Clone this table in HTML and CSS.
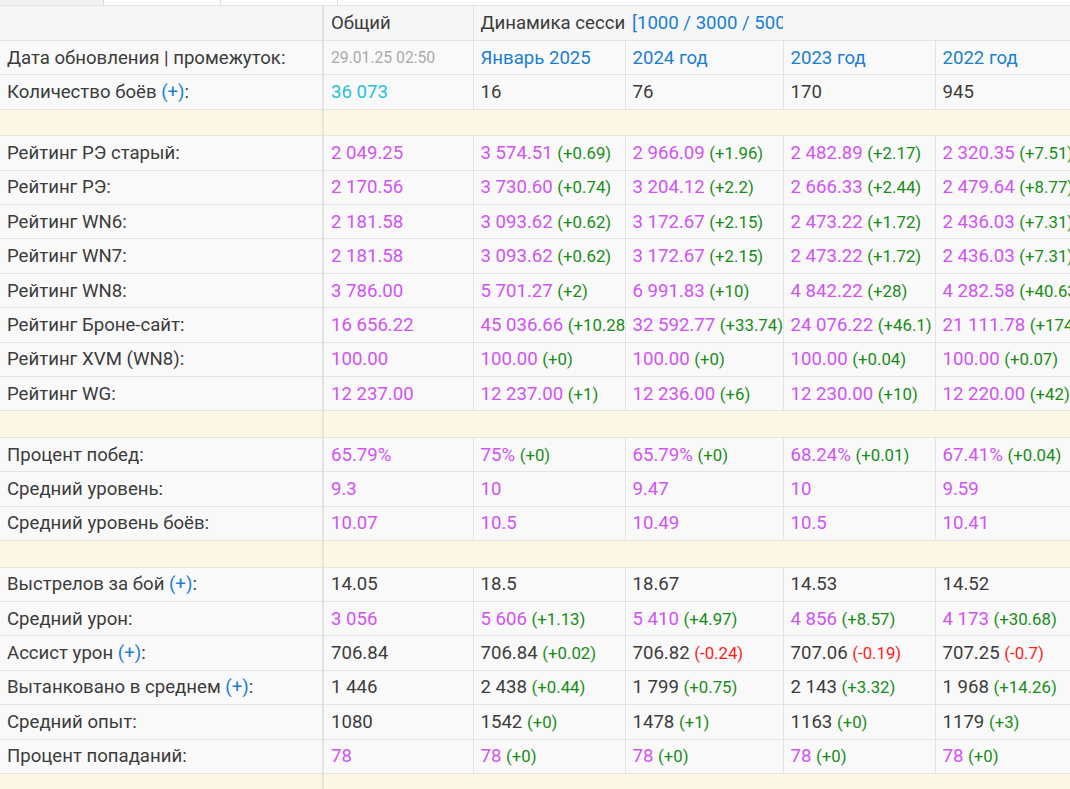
FILE: index.html
```html
<!DOCTYPE html>
<html lang="ru">
<head>
<meta charset="utf-8">
<title>Статистика</title>
<link rel="stylesheet" href="styles.css">
</head>
<body>
<div class="tabs">
  <div class="tab tab-active"></div>
  <div class="tab"></div>
  <div class="tab"></div>
</div>
<div class="wrap">
<table class="stats">
  <colgroup>
    <col class="c-label"><col class="c-total"><col class="c-a"><col class="c-b"><col class="c-c"><col class="c-d">
  </colgroup>
  <tbody>
    <tr class="head">
      <td></td>
      <td class="first">Общий</td>
      <td class="nob">Динамика сессий</td>
      <td class="nob"><span class="link">[1000 / 3000 / 5000]</span></td>
      <td class="nob"></td>
      <td class="nob"></td>
    </tr>
    <tr>
      <td>Дата обновления | промежуток:</td>
      <td class="first date">29.01.25 02:50</td>
      <td class="link">Январь 2025</td>
      <td class="link">2024 год</td>
      <td class="link">2023 год</td>
      <td class="link">2022 год</td>
    </tr>
    <tr>
      <td>Количество боёв <span class="link">(+)</span>:</td>
      <td class="first cyan">36 073</td>
      <td>16</td><td>76</td><td>170</td><td>945</td>
    </tr>
    <tr class="sp"><td></td><td class="first" colspan="5"></td></tr>

    <tr>
      <td>Рейтинг РЭ старый:</td>
      <td class="first p">2 049.25</td>
      <td><span class="p">3 574.51</span> <span class="up">(+0.69)</span></td>
      <td><span class="p">2 966.09</span> <span class="up">(+1.96)</span></td>
      <td><span class="p">2 482.89</span> <span class="up">(+2.17)</span></td>
      <td><span class="p">2 320.35</span> <span class="up">(+7.51)</span></td>
    </tr>
    <tr>
      <td>Рейтинг РЭ:</td>
      <td class="first p">2 170.56</td>
      <td><span class="p">3 730.60</span> <span class="up">(+0.74)</span></td>
      <td><span class="p">3 204.12</span> <span class="up">(+2.2)</span></td>
      <td><span class="p">2 666.33</span> <span class="up">(+2.44)</span></td>
      <td><span class="p">2 479.64</span> <span class="up">(+8.77)</span></td>
    </tr>
    <tr>
      <td>Рейтинг WN6:</td>
      <td class="first p">2 181.58</td>
      <td><span class="p">3 093.62</span> <span class="up">(+0.62)</span></td>
      <td><span class="p">3 172.67</span> <span class="up">(+2.15)</span></td>
      <td><span class="p">2 473.22</span> <span class="up">(+1.72)</span></td>
      <td><span class="p">2 436.03</span> <span class="up">(+7.31)</span></td>
    </tr>
    <tr>
      <td>Рейтинг WN7:</td>
      <td class="first p">2 181.58</td>
      <td><span class="p">3 093.62</span> <span class="up">(+0.62)</span></td>
      <td><span class="p">3 172.67</span> <span class="up">(+2.15)</span></td>
      <td><span class="p">2 473.22</span> <span class="up">(+1.72)</span></td>
      <td><span class="p">2 436.03</span> <span class="up">(+7.31)</span></td>
    </tr>
    <tr>
      <td>Рейтинг WN8:</td>
      <td class="first p">3 786.00</td>
      <td><span class="p">5 701.27</span> <span class="up">(+2)</span></td>
      <td><span class="p">6 991.83</span> <span class="up">(+10)</span></td>
      <td><span class="p">4 842.22</span> <span class="up">(+28)</span></td>
      <td><span class="p">4 282.58</span> <span class="up">(+40.63)</span></td>
    </tr>
    <tr>
      <td>Рейтинг Броне-сайт:</td>
      <td class="first p">16 656.22</td>
      <td><span class="p">45 036.66</span> <span class="up">(+10.28)</span></td>
      <td><span class="p">32 592.77</span> <span class="up">(+33.74)</span></td>
      <td><span class="p">24 076.22</span> <span class="up">(+46.1)</span></td>
      <td><span class="p">21 111.78</span> <span class="up">(+174.2)</span></td>
    </tr>
    <tr>
      <td>Рейтинг XVM (WN8):</td>
      <td class="first p">100.00</td>
      <td><span class="p">100.00</span> <span class="up">(+0)</span></td>
      <td><span class="p">100.00</span> <span class="up">(+0)</span></td>
      <td><span class="p">100.00</span> <span class="up">(+0.04)</span></td>
      <td><span class="p">100.00</span> <span class="up">(+0.07)</span></td>
    </tr>
    <tr>
      <td>Рейтинг WG:</td>
      <td class="first p">12 237.00</td>
      <td><span class="p">12 237.00</span> <span class="up">(+1)</span></td>
      <td><span class="p">12 236.00</span> <span class="up">(+6)</span></td>
      <td><span class="p">12 230.00</span> <span class="up">(+10)</span></td>
      <td><span class="p">12 220.00</span> <span class="up">(+42)</span></td>
    </tr>
    <tr class="sp"><td></td><td class="first" colspan="5"></td></tr>

    <tr>
      <td>Процент побед:</td>
      <td class="first p">65.79%</td>
      <td><span class="p">75%</span> <span class="up">(+0)</span></td>
      <td><span class="p">65.79%</span> <span class="up">(+0)</span></td>
      <td><span class="p">68.24%</span> <span class="up">(+0.01)</span></td>
      <td><span class="p">67.41%</span> <span class="up">(+0.04)</span></td>
    </tr>
    <tr>
      <td>Средний уровень:</td>
      <td class="first p">9.3</td>
      <td class="p">10</td><td class="p">9.47</td><td class="p">10</td><td class="p">9.59</td>
    </tr>
    <tr>
      <td>Средний уровень боёв:</td>
      <td class="first p">10.07</td>
      <td class="p">10.5</td><td class="p">10.49</td><td class="p">10.5</td><td class="p">10.41</td>
    </tr>
    <tr class="sp"><td></td><td class="first" colspan="5"></td></tr>

    <tr>
      <td>Выстрелов за бой <span class="link">(+)</span>:</td>
      <td class="first">14.05</td>
      <td>18.5</td><td>18.67</td><td>14.53</td><td>14.52</td>
    </tr>
    <tr>
      <td>Средний урон:</td>
      <td class="first p">3 056</td>
      <td><span class="p">5 606</span> <span class="up">(+1.13)</span></td>
      <td><span class="p">5 410</span> <span class="up">(+4.97)</span></td>
      <td><span class="p">4 856</span> <span class="up">(+8.57)</span></td>
      <td><span class="p">4 173</span> <span class="up">(+30.68)</span></td>
    </tr>
    <tr>
      <td>Ассист урон <span class="link">(+)</span>:</td>
      <td class="first">706.84</td>
      <td>706.84 <span class="up">(+0.02)</span></td>
      <td>706.82 <span class="down">(-0.24)</span></td>
      <td>707.06 <span class="down">(-0.19)</span></td>
      <td>707.25 <span class="down">(-0.7)</span></td>
    </tr>
    <tr>
      <td>Вытанковано в среднем <span class="link">(+)</span>:</td>
      <td class="first">1 446</td>
      <td>2 438 <span class="up">(+0.44)</span></td>
      <td>1 799 <span class="up">(+0.75)</span></td>
      <td>2 143 <span class="up">(+3.32)</span></td>
      <td>1 968 <span class="up">(+14.26)</span></td>
    </tr>
    <tr>
      <td>Средний опыт:</td>
      <td class="first">1080</td>
      <td>1542 <span class="up">(+0)</span></td>
      <td>1478 <span class="up">(+1)</span></td>
      <td>1163 <span class="up">(+0)</span></td>
      <td>1179 <span class="up">(+3)</span></td>
    </tr>
    <tr>
      <td>Процент попаданий:</td>
      <td class="first p">78</td>
      <td><span class="p">78</span> <span class="up">(+0)</span></td>
      <td><span class="p">78</span> <span class="up">(+0)</span></td>
      <td><span class="p">78</span> <span class="up">(+0)</span></td>
      <td><span class="p">78</span> <span class="up">(+0)</span></td>
    </tr>
    <tr class="sp"><td></td><td class="first" colspan="5"></td></tr>
  </tbody>
</table>
</div>
</body>
</html>
```
FILE: styles.css
```css
html, body {
  margin: 0;
  padding: 0;
  background: #ffffff;
}
body {
  font-family: Roboto, "Liberation Sans", sans-serif;
  color: #3c3c3c;
  overflow: hidden;
}
.tabs {
  display: flex;
  height: 5px;
  background: #ffffff;
}
.tab {
  width: 116px;
  border-right: 1px solid #dddddd;
}
.tab:first-child {
  width: 103px;
}
.tab-active {
  background: #f2f2f2;
}
.wrap {
  width: 100%;
  overflow: hidden;
}
.stats {
  border-collapse: collapse;
  table-layout: fixed;
  width: 1112px;
  font-size: 18.6px;
}
.c-label { width: 323px; }
.c-total { width: 150px; }
.c-a { width: 152px; }
.c-b { width: 158px; }
.c-c { width: 152px; }
.c-d { width: 177px; }
.stats tr {
  height: 34.4px;
  background: #f9f9f9;
}
.stats tr.head {
  height: 35px;
  background: #f6f6f6;
}
.stats td {
  border: 1px solid #e3e3e3;
  padding: 0 0 0 7px;
  white-space: nowrap;
  overflow: hidden;
  text-overflow: clip;
  line-height: 20px;
  vertical-align: middle;
}
.stats tr td:first-child {
  border-left: none;
}
.stats td.first {
  border-left: 2px solid #e3e3e3;
}
.stats tr.head td.nob {
  border-left: none;
  border-right: none;
}
.stats tr.sp {
  height: 26.5px;
  background: #fcf7e5;
}
.stats tr.sp td {
  border-color: #e8e4d6;
}
.link { color: #1a7fcf; }
.date { color: #aaaaaa; font-size: 15.7px; }
.cyan { color: #26c2db; }
.p { color: #d054f2; }
.up { color: #178c17; font-size: 16.8px; }
.down { color: #ff1a1a; font-size: 16.8px; }
```
